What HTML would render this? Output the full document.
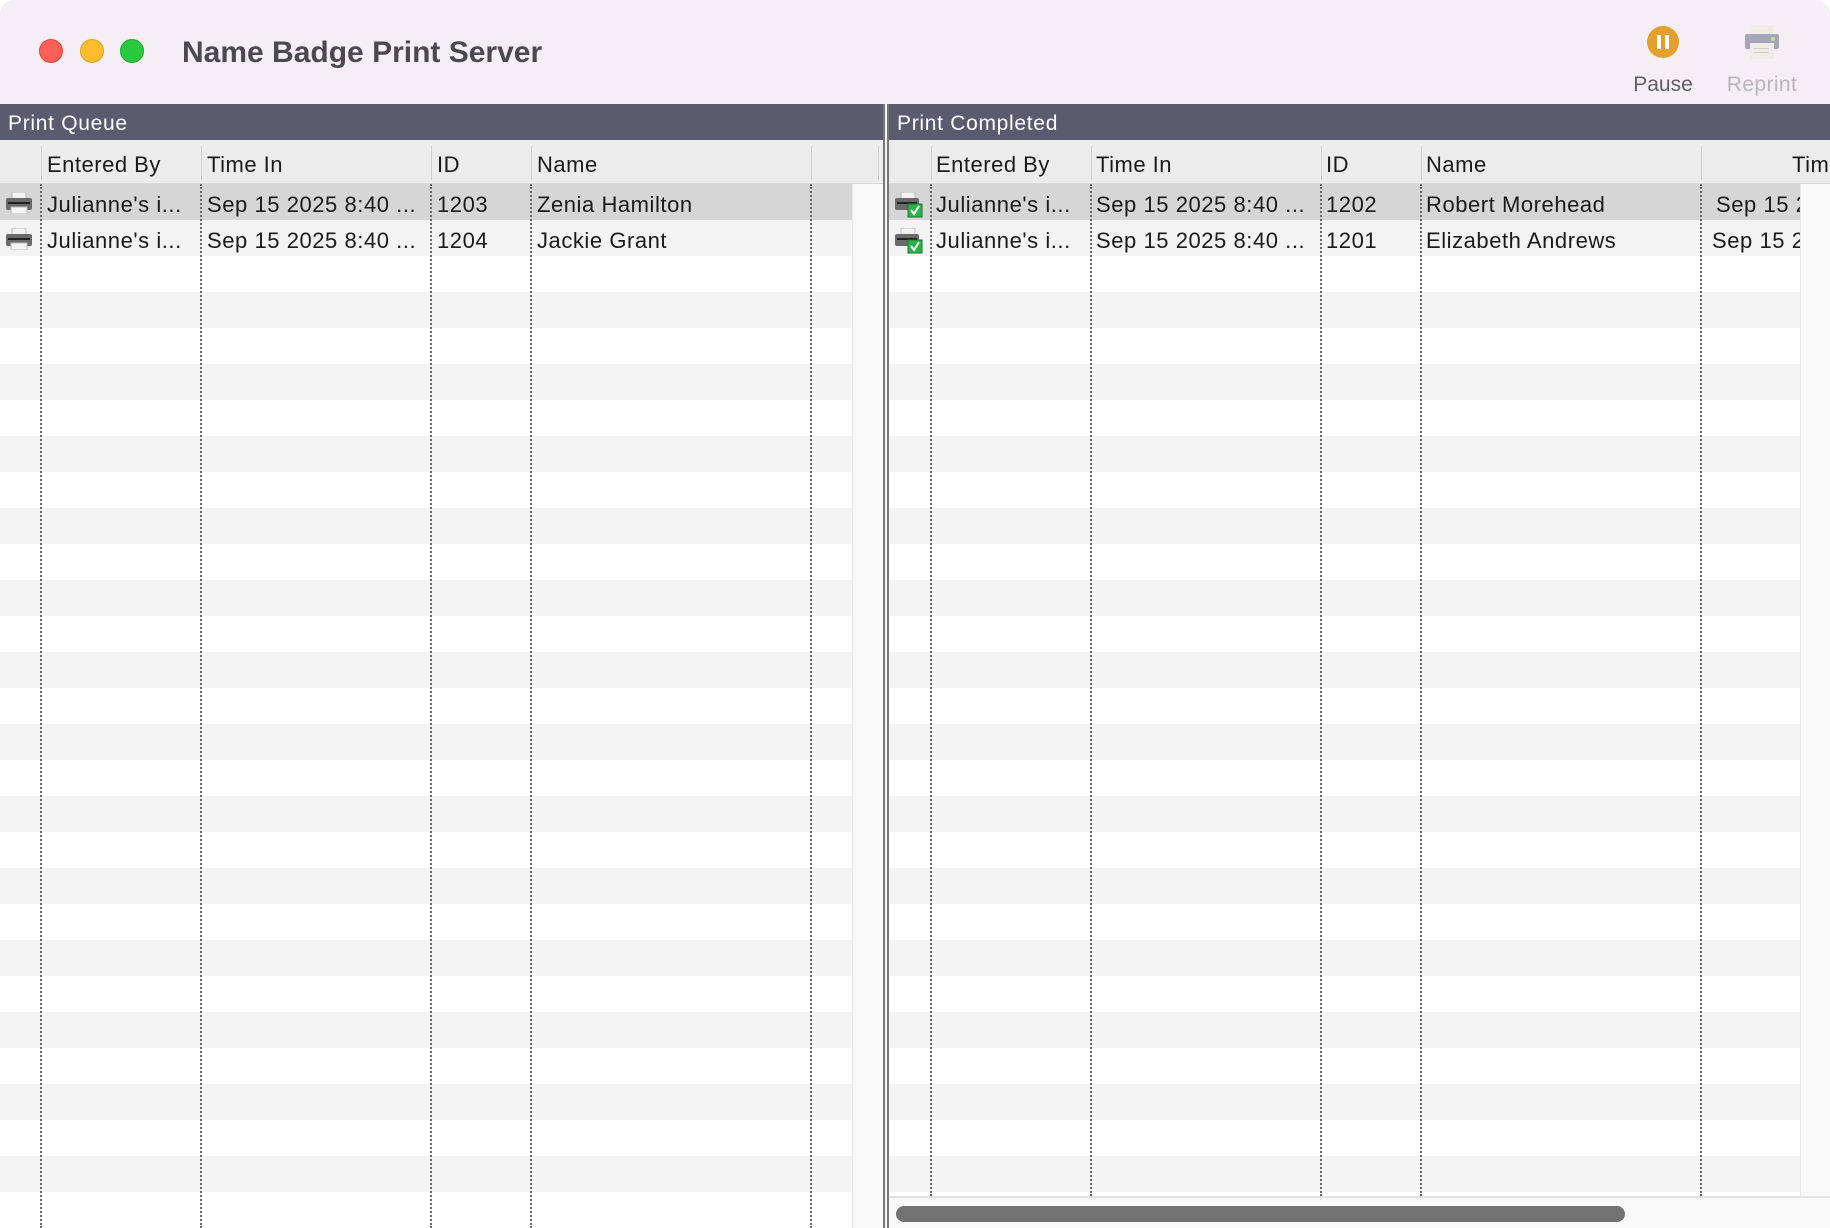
<!DOCTYPE html>
<html><head><meta charset="utf-8"><style>
*{margin:0;padding:0;box-sizing:border-box}
body{width:1830px;height:1228px;background:#fff;font-family:"Liberation Sans",sans-serif;position:relative;overflow:hidden}
.abs{position:absolute}
.tl{position:absolute;top:39px;width:24px;height:24px;border-radius:50%}
.hdr{position:absolute;top:104px;height:36px;background:#5c5a6e;color:#fff;font-size:21px;line-height:39px;padding-left:8px;letter-spacing:0.7px}
.colh{position:absolute;top:140px;height:44px;background:#ececec;border-bottom:1px solid #d8d8d8}
.ch{position:absolute;top:140px;height:44px;line-height:49px;font-size:22px;color:#1a1a1a;letter-spacing:0.5px}
.chsep{position:absolute;top:146px;height:34px;width:1px;background:#d0d0d0}
.rows{position:absolute;top:184px;background:repeating-linear-gradient(to bottom,#fff 0,#fff 36px,#f2f3f2 36px,#f2f3f2 72px)}
.dot{position:absolute;top:184px;width:0;border-left:2px dotted #666}
.cell{position:absolute;font-size:22px;color:#1a1a1a;height:36px;line-height:41px;white-space:nowrap;letter-spacing:0.55px}
</style></head><body>
<div class="abs" style="left:0;top:0;width:1830px;height:104px;background:#f5eef5;border-radius:14px 14px 0 0"></div>
<div class="tl" style="left:39px;background:#fe5f57;border:1px solid #e0443e"></div>
<div class="tl" style="left:80px;background:#febc2e;border:1px solid #dea123"></div>
<div class="tl" style="left:120px;background:#28c840;border:1px solid #1aab29"></div>
<div class="abs" style="left:182px;top:35px;font-size:30px;font-weight:bold;color:#4a4a4c;line-height:36px">Name Badge Print Server</div>
<svg class="abs" style="left:1647px;top:26px" width="32" height="32"><circle cx="16" cy="16" r="16" fill="#e4a02a"/><rect x="10" y="9" width="4" height="14" fill="#fff"/><rect x="18" y="9" width="4" height="14" fill="#fff"/></svg>
<div class="abs" style="left:1623px;top:73px;width:80px;text-align:center;font-size:21px;color:#606064">Pause</div>
<svg class="abs" style="left:1745px;top:25px" width="34" height="34"><rect x="6" y="0" width="22" height="10" fill="#efebe6"/><rect x="0" y="9" width="34" height="15" rx="2" fill="#a7a5b8"/><circle cx="28" cy="14" r="2" fill="#b8e6a0"/><rect x="5" y="18" width="24" height="16" fill="#efebe6"/><rect x="9" y="23" width="15" height="1" fill="#d0ccc5"/><rect x="9" y="27" width="15" height="1" fill="#d0ccc5"/></svg>
<div class="abs" style="left:1718px;top:73px;width:88px;text-align:center;font-size:21px;color:#b8b6ba;letter-spacing:0.4px">Reprint</div>

<!-- left panel -->
<div class="hdr" style="left:0;width:883px">Print Queue</div>
<div class="colh" style="left:0;width:883px"></div>
<div class="chsep" style="left:41px"></div><div class="chsep" style="left:201px"></div><div class="chsep" style="left:431px"></div><div class="chsep" style="left:531px"></div><div class="chsep" style="left:811px"></div><div class="chsep" style="left:878px"></div>
<div class="ch" style="left:47px">Entered By</div><div class="ch" style="left:207px">Time In</div><div class="ch" style="left:437px">ID</div><div class="ch" style="left:537px">Name</div>
<div class="rows" style="left:0;width:852px;height:1044px"></div>
<div class="abs" style="left:0;top:184px;width:852px;height:36px;background:#d6d6d6"></div>
<div class="abs" style="left:852px;top:184px;width:31px;height:1044px;background:#f8f8f8;border-left:1px solid #e8e8e8"></div>
<div class="dot" style="left:40px;height:1044px"></div><div class="dot" style="left:200px;height:1044px"></div><div class="dot" style="left:430px;height:1044px"></div><div class="dot" style="left:530px;height:1044px"></div><div class="dot" style="left:810px;height:1044px"></div>

<!-- divider -->
<div class="abs" style="left:883px;top:104px;width:6px;height:1124px;background:#f4f4f4;border-left:2px solid #777;border-right:2px solid #777"></div>

<!-- right panel -->
<div class="hdr" style="left:889px;width:941px">Print Completed</div>
<div class="colh" style="left:889px;width:941px"></div>
<div class="chsep" style="left:931px"></div><div class="chsep" style="left:1091px"></div><div class="chsep" style="left:1321px"></div><div class="chsep" style="left:1421px"></div><div class="chsep" style="left:1701px"></div>
<div class="ch" style="left:936px">Entered By</div><div class="ch" style="left:1096px">Time In</div><div class="ch" style="left:1326px">ID</div><div class="ch" style="left:1426px">Name</div><div class="ch" style="left:1792px">Tim</div>
<div class="rows" style="left:889px;width:911px;height:1012px"></div>
<div class="abs" style="left:889px;top:184px;width:911px;height:36px;background:#d6d6d6"></div>
<div class="abs" style="left:1800px;top:184px;width:30px;height:1012px;background:#f8f8f8;border-left:1px solid #e8e8e8"></div>
<div class="dot" style="left:930px;height:1012px"></div><div class="dot" style="left:1090px;height:1012px"></div><div class="dot" style="left:1320px;height:1012px"></div><div class="dot" style="left:1420px;height:1012px"></div><div class="dot" style="left:1700px;height:1012px"></div>
<div class="abs" style="left:889px;top:1196px;width:941px;height:32px;background:#f8f8f8;border-top:2px solid #e2e2e2"></div>
<div class="abs" style="left:896px;top:1206px;width:729px;height:16px;border-radius:8px;background:#727272"></div>

<!-- row content left -->
<svg class="abs" style="left:6px;top:192px" width="26" height="22"><rect x="6" y="0" width="14" height="7" fill="#f2f2f2" stroke="#bbb"/><rect x="0" y="6" width="26" height="12" rx="2" fill="#6a6a6a"/><rect x="2" y="10" width="22" height="2" fill="#222"/><rect x="5" y="15" width="16" height="7" fill="#f5f5f5" stroke="#bbb"/></svg>
<svg class="abs" style="left:6px;top:228px" width="26" height="22"><rect x="6" y="0" width="14" height="7" fill="#f2f2f2" stroke="#bbb"/><rect x="0" y="6" width="26" height="12" rx="2" fill="#6a6a6a"/><rect x="2" y="10" width="22" height="2" fill="#222"/><rect x="5" y="15" width="16" height="7" fill="#f5f5f5" stroke="#bbb"/></svg>
<div class="cell" style="left:47px;top:184px">Julianne's i...</div><div class="cell" style="left:207px;top:184px">Sep 15 2025 8:40 ...</div><div class="cell" style="left:437px;top:184px">1203</div><div class="cell" style="left:537px;top:184px">Zenia Hamilton</div>
<div class="cell" style="left:47px;top:220px">Julianne's i...</div><div class="cell" style="left:207px;top:220px">Sep 15 2025 8:40 ...</div><div class="cell" style="left:437px;top:220px">1204</div><div class="cell" style="left:537px;top:220px">Jackie Grant</div>

<!-- row content right -->
<svg class="abs" style="left:895px;top:192px" width="28" height="26"><rect x="6" y="0" width="14" height="7" fill="#f2f2f2" stroke="#bbb"/><rect x="0" y="6" width="24" height="12" rx="2" fill="#6a6a6a"/><rect x="2" y="10" width="20" height="2" fill="#222"/><rect x="13" y="12" width="14" height="13" fill="#2db24a" stroke="#1a7a30"/><path d="M16 18 l3 4 l5 -8" stroke="#fff" stroke-width="2" fill="none"/></svg>
<svg class="abs" style="left:895px;top:228px" width="28" height="26"><rect x="6" y="0" width="14" height="7" fill="#f2f2f2" stroke="#bbb"/><rect x="0" y="6" width="24" height="12" rx="2" fill="#6a6a6a"/><rect x="2" y="10" width="20" height="2" fill="#222"/><rect x="13" y="12" width="14" height="13" fill="#2db24a" stroke="#1a7a30"/><path d="M16 18 l3 4 l5 -8" stroke="#fff" stroke-width="2" fill="none"/></svg>
<div class="cell" style="left:936px;top:184px">Julianne's i...</div><div class="cell" style="left:1096px;top:184px">Sep 15 2025 8:40 ...</div><div class="cell" style="left:1326px;top:184px">1202</div><div class="cell" style="left:1426px;top:184px">Robert Morehead</div><div class="cell" style="left:1716px;top:184px;width:84px;overflow:hidden">Sep 15 2025</div>
<div class="cell" style="left:936px;top:220px">Julianne's i...</div><div class="cell" style="left:1096px;top:220px">Sep 15 2025 8:40 ...</div><div class="cell" style="left:1326px;top:220px">1201</div><div class="cell" style="left:1426px;top:220px">Elizabeth Andrews</div><div class="cell" style="left:1712px;top:220px;width:88px;overflow:hidden">Sep 15 2025</div>
</body></html>
